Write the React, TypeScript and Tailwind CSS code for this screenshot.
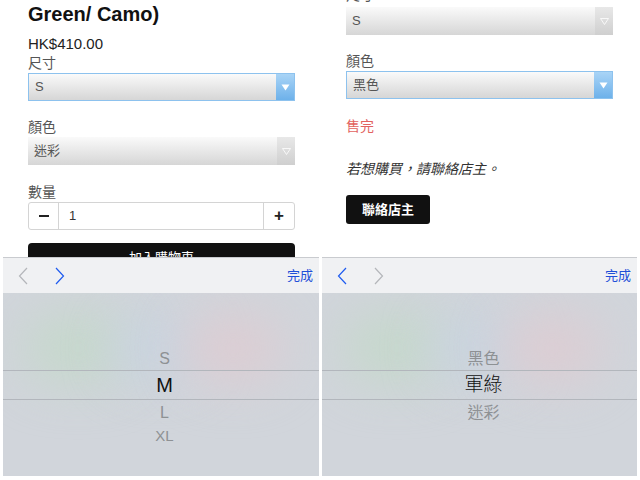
import React from 'react';

const font = { fontFamily: '"Liberation Sans", "Noto Sans CJK TC", sans-serif' };

function Chevron({ dir, active }: { dir: 'left' | 'right'; active: boolean }) {
  return (
    <svg width="10" height="18" viewBox="0 0 10 18" fill="none">
      <path
        d={dir === 'left' ? 'M9 1 L1.5 9 L9 17' : 'M1 1 L8.5 9 L1 17'}
        stroke={active ? '#1e5bf0' : '#b4b6ba'}
        strokeWidth="1.2"
      />
    </svg>
  );
}

function Select({ value, focused }: { value: string; focused?: boolean }) {
  return (
    <div
      className={`flex h-[28px] w-[267px] ${focused ? 'border border-[#8dc2ee]' : ''} bg-gradient-to-b from-[#fafafa] to-[#d6d6d6]`}
    >
      <div className="flex flex-1 items-center pl-[6px] text-[13px] text-[#555]">{value}</div>
      {focused ? (
        <div className="flex w-[18px] items-center justify-center bg-gradient-to-b from-[#a9d4f6] to-[#6db1ea]">
          <svg width="9" height="7" viewBox="0 0 9 7">
            <path d="M0.5 0.5 H8.5 L4.5 6.5 Z" fill="#fff" />
          </svg>
        </div>
      ) : (
        <div className="flex w-[18px] items-center justify-center bg-gradient-to-b from-[#e8e8e8] to-[#cfcfcf]">
          <svg width="9" height="7" viewBox="0 0 9 7">
            <path d="M0.5 0.5 H8.5 L4.5 6.5 Z" fill="none" stroke="#fff" strokeWidth="0.8" />
          </svg>
        </div>
      )}
    </div>
  );
}

function Keyboard({ items, selected, cjk, leftActive }: { items: string[]; selected: number; cjk?: boolean; leftActive: boolean }) {
  return (
    <div className="flex h-[219px] flex-col">
      <div className="flex h-[36px] items-center border-t border-[#c9cbcf] bg-[#f0f1f3] pl-[15px] pr-[6px]">
        <Chevron dir="left" active={leftActive} />
        <div className="w-[27px]" />
        <Chevron dir="right" active={!leftActive} />
        <div className="flex-1" />
        <span className="text-[13px] text-[#1e4fd8]">完成</span>
      </div>
      <div className="relative flex-1 overflow-hidden bg-[#d1d5db]">
        <div className="absolute left-[20px] top-[20px] h-[70px] w-[110px] rounded-full bg-[#c6d8cc] blur-xl" />
        <div className="absolute left-[110px] top-[25px] h-[60px] w-[90px] rounded-full bg-[#c9d4e0] blur-xl" />
        <div className="absolute left-[180px] top-[20px] h-[70px] w-[100px] rounded-full bg-[#dccdd3] blur-xl" />
        <div className="relative flex flex-col pt-[51px]">
          {items.map((it, i) => {
            const sel = i === selected;
            const above = i < selected;
            return (
              <div
                key={it}
                className={`flex justify-center ${
                  sel
                    ? 'h-[30px] items-center border-y border-[#b2b6bc] text-[#111]'
                    : above
                      ? 'h-[26px] items-end pb-[3px] leading-[16px] text-[#8e9194]'
                      : i === 3
                        ? 'h-[21px] items-center text-[#8e9194]'
                        : 'h-[26px] items-center text-[#8e9194]'
                } ${sel ? (cjk ? 'text-[19px] font-light' : 'text-[20px]') : i === 3 ? 'text-[15px]' : 'text-[16px]'}`}
              >
                <span className={cjk ? 'pl-[8px]' : 'pl-[7px]'}>{it}</span>
              </div>
            );
          })}
        </div>
      </div>
    </div>
  );
}

export default function App() {
  return (
    <div className="flex h-[480px] w-[640px] gap-[3px] overflow-hidden bg-white px-[3px]" style={font}>
      <div className="flex w-[316px] flex-col">
        <div className="h-[257px] overflow-hidden pl-[25px]">
          <h1 className="mt-[2px] text-[20px] font-bold leading-[24px] text-[#111]">Green/ Camo)</h1>
          <div className="mt-[9px] text-[15px] leading-[18px] text-[#222]">HK$410.00</div>
          <div className="mt-[1px] text-[14px] leading-[18px] text-[#555]">尺寸</div>
          <div className="mt-[1px]">
            <Select value="S" focused />
          </div>
          <div className="mt-[17px] text-[14px] leading-[18px] text-[#555]">顏色</div>
          <div className="mt-[1px]">
            <Select value="迷彩" />
          </div>
          <div className="mt-[18px] text-[14px] leading-[18px] text-[#555]">數量</div>
          <div className="mt-[1px] flex h-[28px] w-[267px] rounded-[3px] border border-[#d4d4d4]">
            <div className="flex w-[30px] items-center justify-center border-r border-[#d4d4d4]">
              <div className="h-[2.5px] w-[10px] bg-[#222]" />
            </div>
            <div className="flex flex-1 items-center pl-[10px] text-[13px] text-[#333]">1</div>
            <div className="flex w-[31px] items-center justify-center border-l border-[#d4d4d4] text-[17px] font-bold text-[#222]">+</div>
          </div>
          <div className="mt-[13px] flex h-[30px] w-[267px] items-center justify-center rounded-[4px] bg-[#111] text-[13px] text-white">
            加入購物車
          </div>
        </div>
        <Keyboard items={['S', 'M', 'L', 'XL']} selected={1} leftActive={false} />
      </div>
      <div className="flex w-[315px] flex-col">
        <div className="h-[257px] overflow-hidden pl-[24px]">
          <div className="mt-[-14px] text-[14px] leading-[18px] text-[#555]">尺寸</div>
          <div className="mt-[3px]">
            <Select value="S" />
          </div>
          <div className="mt-[17px] text-[14px] leading-[18px] text-[#555]">顏色</div>
          <div className="mt-[1px]">
            <Select value="黑色" focused />
          </div>
          <div className="mt-[18px] text-[14px] leading-[18px] text-[#e2625f]">售完</div>
          <div className="mt-[25px] text-[14px] italic leading-[18px] text-[#333]">若想購買，請聯絡店主。</div>
          <div className="mt-[17px] flex h-[29px] w-[84px] items-center justify-center rounded-[3px] bg-[#111] text-[13px] font-bold text-white">
            聯絡店主
          </div>
        </div>
        <Keyboard items={['黑色', '軍綠', '迷彩']} selected={1} cjk leftActive />
      </div>
    </div>
  );
}
